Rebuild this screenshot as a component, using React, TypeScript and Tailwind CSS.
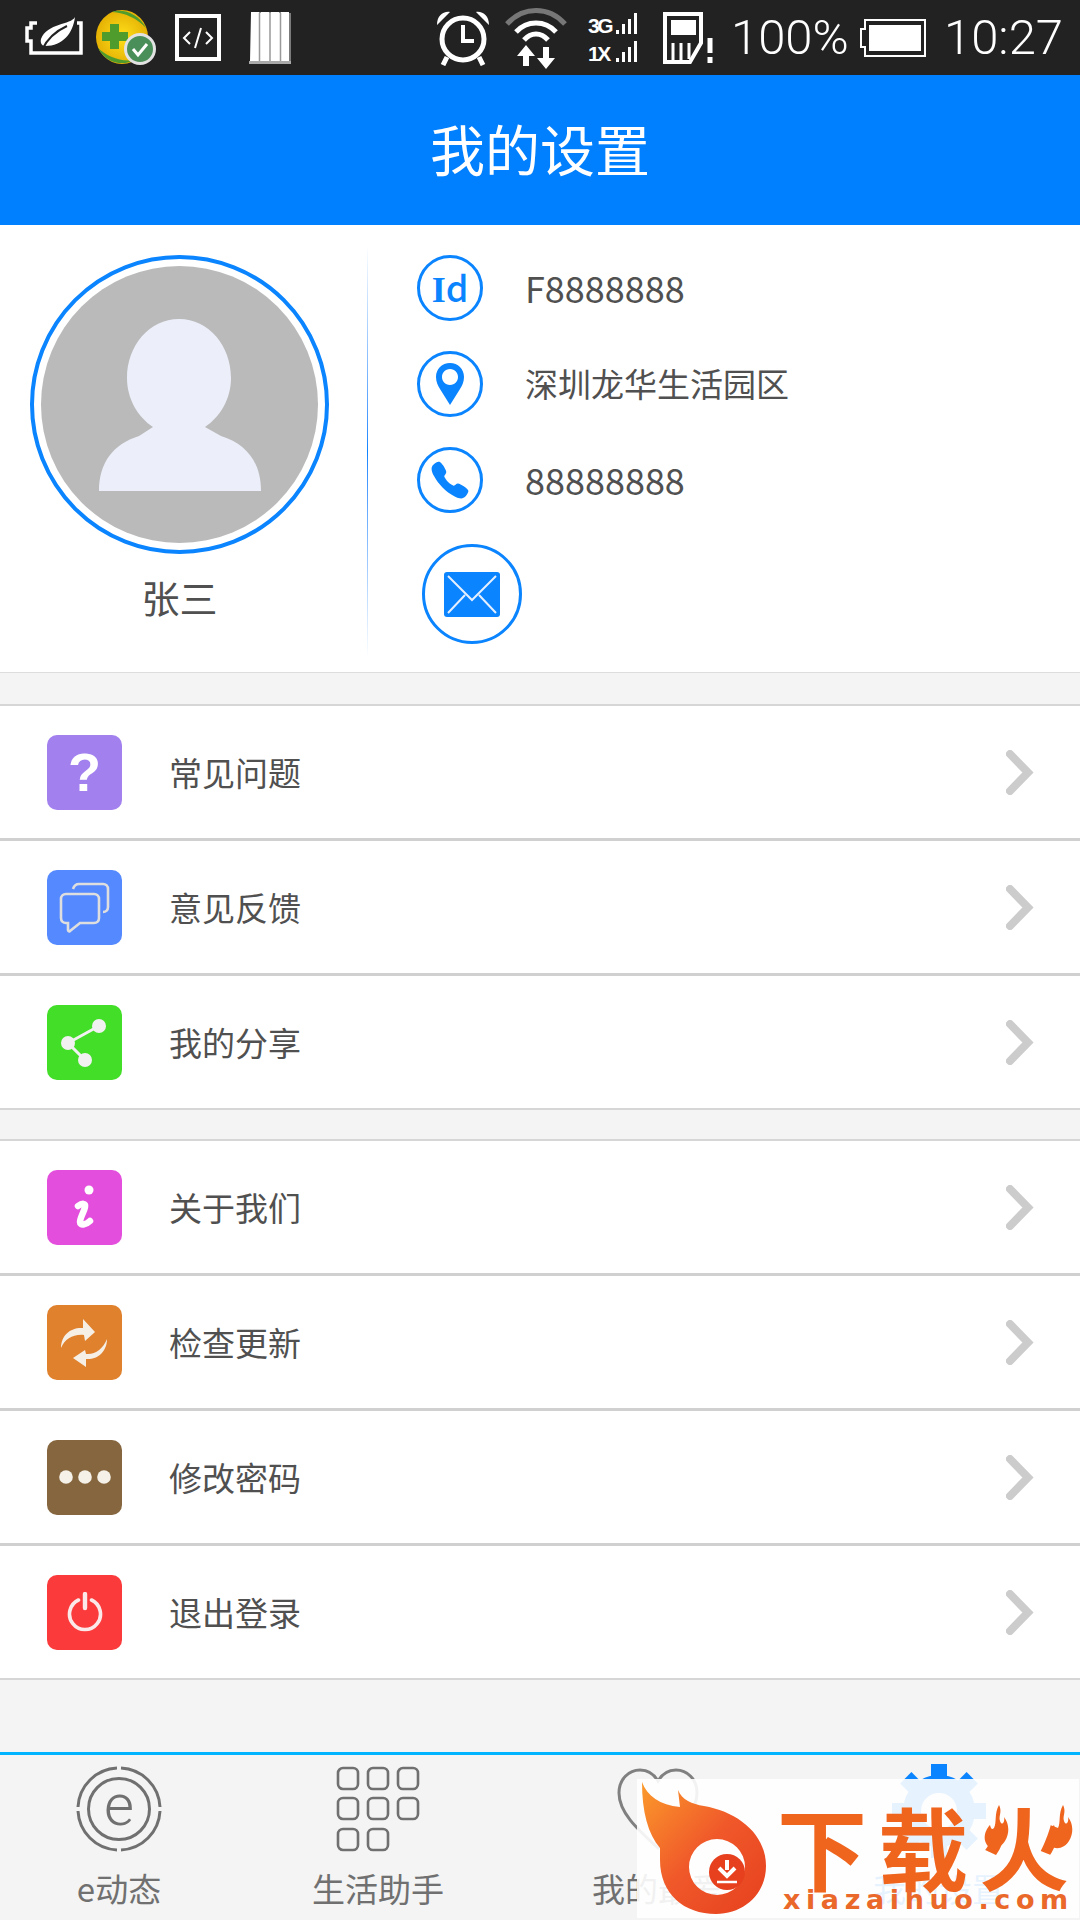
import { IoCall } from 'react-icons/io5';
import type { ReactNode } from 'react';

function LeafBattery() {
  return (
    <svg width="58" height="41" viewBox="0 0 58 41" className="-mt-[4px] ml-[25px]">
      <path d="M12 8H6v5H2v13h4v12h50V8h-4" fill="none" stroke="#fff" strokeWidth="3.500" />
      <path d="M50 2C46 10 22 8 16 24c-1 4 1 7 4 7C38 31 48 18 50 2z" fill="#fff" />
      <path d="M17 35C22 24 31 16 42 11" fill="none" stroke="#222" strokeWidth="2" />
    </svg>
  );
}

function Guard() {
  return (
    <svg width="62" height="56" viewBox="0 0 62 56" className="ml-[12px]">
      <defs>
        <radialGradient id="guard" cx="0.5" cy="0.5" r="0.6">
          <stop offset="0" stopColor="#ffe01a" />
          <stop offset="1" stopColor="#e0a800" />
        </radialGradient>
      </defs>
      <ellipse cx="27" cy="27" rx="26" ry="27" fill="url(#guard)" />
      <path d="M17 2C28-2 44 4 51 18 42 8 30 3 17 2zM3 38c8 8 22 14 36 12-10 6-28 4-36-12z" fill="#4f9c2d" />
      <path d="M15 14h9v8h9v9h-9v8h-9v-8H7v-9h8z" fill="#4f9c2d" />
      <circle cx="45" cy="39" r="14.500" fill="#4a8f5a" stroke="#e2e2e2" strokeWidth="3" />
      <path d="M38 39l5 6 9-11" fill="none" stroke="#fff" strokeWidth="3" />
    </svg>
  );
}

function CodeBox() {
  return (
    <svg width="46" height="47" viewBox="0 0 46 47" className="ml-[18px]">
      <rect x="2" y="2" width="42" height="43" fill="none" stroke="#fff" strokeWidth="4" />
      <path d="M15 18l-6 6 6 6M31 18l6 6-6 6M26 14l-6 20" fill="none" stroke="#fff" strokeWidth="2" />
    </svg>
  );
}

function Barcode() {
  return (
    <svg width="42" height="52" viewBox="0 0 42 52" className="ml-[28px]">
      <path d="M2 0h8l1 1 1-1h8l1 1 1-1h8l1 1 1-1h8v49l1 3H0l1-3z" fill="#fff" />
      <path d="M0 49h42v3H0z" fill="#aaa" />
      <path d="M10.500 1v48M21 1v48M31.500 1v48M41 1v48" stroke="#999" strokeWidth="1.500" />
    </svg>
  );
}

function Alarm() {
  return (
    <svg width="56" height="56" viewBox="0 0 56 56">
      <circle cx="28" cy="29" r="21" fill="none" stroke="#fff" strokeWidth="5" />
      <path d="M2 15C2 6 8 1 15 2zM54 15c0-9-6-14-13-13z" fill="#fff" />
      <path d="M28 15v16h11" fill="none" stroke="#fff" strokeWidth="4" />
      <path d="M12 47l-4 8M44 47l4 8" stroke="#fff" strokeWidth="5" />
    </svg>
  );
}

function Wifi() {
  return (
    <svg width="62" height="62" viewBox="0 0 62 62" className="ml-[14px]">
      <path d="M2 17C18 -1 44 -1 60 17" fill="none" stroke="#777" strokeWidth="5" />
      <path d="M11 25C22 13 40 13 51 25" fill="none" stroke="#fff" strokeWidth="5" />
      <path d="M19 33C26 25 36 25 43 33" fill="none" stroke="#fff" strokeWidth="5" />
      <path d="M21 38l9 11h-6v10h-6V49h-6zM41 62l9-11h-6V40h-6v11h-6z" fill="#fff" />
    </svg>
  );
}

function Bars() {
  return (
    <svg width="21" height="21" viewBox="0 0 21 21">
      <path d="M0 21v-4h3v4zM6 21V11h3v10zM12 21V6h3v15zM18 21V0h3v21z" fill="#fff" />
    </svg>
  );
}

function Signal() {
  return (
    <div className="ml-[21px] flex w-[49px] flex-col gap-[7px] text-[21px] leading-[16px] font-bold text-white font-['Liberation_Sans',sans-serif]">
      <div className="flex h-[21px] items-end justify-between">
        <span className="tracking-[-2.500px]">3G</span>
        <Bars />
      </div>
      <div className="flex h-[21px] items-end justify-between">
        <span className="tracking-[-2.500px]">1X</span>
        <Bars />
      </div>
    </div>
  );
}

function Sim() {
  return (
    <svg width="52" height="52" viewBox="0 0 52 52" className="ml-[26px]">
      <path d="M2 2h36v29L27 50H2z" fill="none" stroke="#fff" strokeWidth="4" />
      <rect x="8" y="8" width="25" height="15" fill="#fff" />
      <path d="M10 31v18M18 31v18M26 31v16" stroke="#fff" strokeWidth="3" />
      <path d="M47 26v15M47 45v6" stroke="#fff" strokeWidth="5" />
    </svg>
  );
}

function BatteryFull() {
  return (
    <svg width="66" height="38" viewBox="0 0 66 38" className="ml-[15px]">
      <path d="M5 10V1h60v36H5v-9H1V10z" fill="none" stroke="#fff" strokeWidth="2" />
      <rect x="9" y="6" width="52" height="26" fill="#fff" />
    </svg>
  );
}

function StatusBar() {
  return (
    <div className="flex h-[75px] items-center bg-[#222222] text-[49px] leading-none font-light text-white font-['Roboto',sans-serif]">
      <LeafBattery />
      <Guard />
      <CodeBox />
      <Barcode />
      <div className="ml-[144px]">
        <Alarm />
      </div>
      <Wifi />
      <Signal />
      <Sim />
      <span className="ml-[16px] w-[114px] whitespace-nowrap">100%</span>
      <BatteryFull />
      <span className="ml-[18px] whitespace-nowrap">10:27</span>
    </div>
  );
}

function IconCircle({ children }: { children: ReactNode }) {
  return (
    <div className="flex h-[66px] w-[66px] shrink-0 items-center justify-center rounded-full border-[3px] border-[#0a84ff] text-[#0a84ff]">
      {children}
    </div>
  );
}

function InfoRow({ icon, text }: { icon: ReactNode; text: ReactNode }) {
  return (
    <div className="flex h-[66px] items-center">
      <IconCircle>{icon}</IconCircle>
      <div className="ml-[42px]">{text}</div>
    </div>
  );
}

function Profile() {
  return (
    <section className="flex h-[448px] border-b border-[#dddddd] bg-white">
      <div className="flex w-[367px] flex-col items-center pt-[30px] pr-[8px]">
        <div className="h-[299px] w-[299px] rounded-full border-[4px] border-[#0a84ff] bg-white p-[7px]">
          <div className="h-full w-full rounded-full bg-[#bababa]">
            <svg viewBox="0 0 277 277" className="h-full w-full">
              <path
                d="M138 53C108 53 86 80 86 112C86 133 97 151 112 161L98 170C72 178 58 197 58 225L220 225C220 197 206 178 180 170L164 161C179 151 190 133 190 112C190 80 168 53 138 53Z"
                fill="#ecefFA"
              />
            </svg>
          </div>
        </div>
        <div className="mt-[18px] text-[38px] leading-[50px] text-[#505050]">张三</div>
      </div>
      <div className="mt-[20px] h-[413px] w-px bg-gradient-to-b from-white via-[#0a84ff] to-white" />
      <div className="flex flex-col pt-[30px] pl-[49px]">
        <div className="flex flex-col gap-[30px] text-[#505050]">
          <InfoRow
            icon={
              <span className="flex items-baseline text-[36px] leading-none font-medium">
                <span className="font-['Liberation_Serif',serif] font-bold">I</span>
                <span>d</span>
              </span>
            }
            text={<span className="text-[36px] leading-none">F8888888</span>}
          />
          <InfoRow
            icon={
              <svg width="28" height="42" viewBox="0 0 28 42">
                <path
                  fillRule="evenodd"
                  d="M14 0C6 0 0 6 0 14c0 5 2 9 4 12l10 16 10-16c2-3 4-7 4-12C28 6 22 0 14 0zm0 6c5 0 8 4 8 8s-3 8-8 8-8-4-8-8 3-8 8-8z"
                  fill="currentColor"
                />
              </svg>
            }
            text={<span className="text-[33px] leading-none">深圳龙华生活园区</span>}
          />
          <InfoRow
            icon={<IoCall size={42} />}
            text={<span className="text-[36px] leading-none">88888888</span>}
          />
        </div>
        <div className="mt-[31px] ml-[5px] flex h-[100px] w-[100px] items-center justify-center rounded-full border-[3px] border-[#0a84ff]">
          <svg width="56" height="45" viewBox="0 0 56 45">
            <rect width="56" height="45" rx="3" fill="#0a84ff" />
            <path d="M4 4l24 24L52 4M4 41l17-18M52 41L35 23" fill="none" stroke="#e4efff" strokeWidth="2" />
          </svg>
        </div>
      </div>
    </section>
  );
}

const qIcon = <span className="text-[54px] leading-none font-bold text-white font-['Liberation_Sans',sans-serif]">?</span>;

const chatIcon = (
  <svg width="75" height="75" viewBox="0 0 75 75" fill="none" stroke="#dedede" strokeWidth="2.600">
    <path d="M26 19c1-3 3-5 6-5h24c3 0 5 2 5 5v18c0 3-2 5-5 5" />
    <path d="M19 24h28c3 0 5 2 5 5v19c0 3-2 5-5 5H33l-10 8c-1 1-2 0-2-1v-7h-2c-3 0-5-2-5-5V29c0-3 2-5 5-5z" />
  </svg>
);

const shareIcon = (
  <svg width="75" height="75" viewBox="0 0 75 75">
    <path d="M52 21L21 38l17 17" fill="none" stroke="#f1f1f1" strokeWidth="3" />
    <circle cx="52" cy="21" r="7" fill="#f1f1f1" />
    <circle cx="21" cy="38" r="7" fill="#f1f1f1" />
    <circle cx="38" cy="55" r="7" fill="#f1f1f1" />
  </svg>
);

const infoIcon = (
  <svg width="75" height="75" viewBox="0 0 75 75" fill="none" stroke="#fff" strokeLinecap="round">
    <circle cx="42" cy="20" r="4.500" fill="#fff" stroke="none" />
    <path d="M31 36c4-3 8-3 7 1-1 5-5 11-5 15 0 4 6 3 10-1" strokeWidth="6.500" />
  </svg>
);

const refreshIcon = (
  <svg width="75" height="75" viewBox="0 0 75 75">
    <path d="M14 43C14 30 24 22 36 23L36 14 48 27 38 36 37 30C26 29 18 34 14 43Z" fill="#f6efe6" />
    <path d="M60 34C60 47 50 55 39 54L39 62 26 53 38 45 39 49C48 50 56 44 60 34Z" fill="#f6efe6" />
  </svg>
);

const dotsIcon = (
  <svg width="52" height="14" viewBox="0 0 52 14">
    <circle cx="7" cy="7" r="6.800" fill="#f5f0e8" />
    <circle cx="26" cy="7" r="6.800" fill="#f5f0e8" />
    <circle cx="45" cy="7" r="6.800" fill="#f5f0e8" />
  </svg>
);

const powerIcon = (
  <svg width="36" height="40" viewBox="0 0 36 40" fill="none" stroke="#fbe9e9" strokeWidth="3.600" strokeLinecap="round">
    <path d="M11.500 8A15.500 15.500 0 1 0 24.500 8" />
    <path d="M18 2v14" strokeWidth="4.400" />
  </svg>
);

function MenuRow({ label, bg, icon, last }: { label: string; bg: string; icon: ReactNode; last?: boolean }) {
  return (
    <div className={`flex items-center pr-[46px] pl-[47px] ${last ? 'h-[134px] border-b-2 border-[#d6d6d6]' : 'h-[135px] border-b-[3px] border-[#d0d0d0]'}`}>
      <div className={`flex h-[75px] w-[75px] items-center justify-center rounded-[10px] ${bg}`}>{icon}</div>
      <span className="ml-[47px] flex-1 text-[33px] leading-none text-[#505050]">{label}</span>
      <svg width="28" height="45" viewBox="0 0 28 45" fill="none" stroke="#cccccc" strokeWidth="8" strokeLinecap="round">
        <path d="M4 4l18 18.500L4 41" />
      </svg>
    </div>
  );
}

function Menus() {
  return (
    <>
      <section className="mt-[31px] border-t-2 border-[#d6d6d6] bg-white">
        <MenuRow label="常见问题" bg="bg-[#a281ee]" icon={qIcon} />
        <MenuRow label="意见反馈" bg="bg-[#5589ff]" icon={chatIcon} />
        <MenuRow label="我的分享" bg="bg-[#42de28]" icon={shareIcon} last />
      </section>
      <section className="mt-[29px] border-t-2 border-[#d6d6d6] bg-white">
        <MenuRow label="关于我们" bg="bg-[#e34fdc]" icon={infoIcon} />
        <MenuRow label="检查更新" bg="bg-[#e0812d]" icon={refreshIcon} />
        <MenuRow label="修改密码" bg="bg-[#85663e]" icon={dotsIcon} />
        <MenuRow label="退出登录" bg="bg-[#fb3b3b]" icon={powerIcon} last />
      </section>
    </>
  );
}

const eIcon = (
  <svg width="86" height="86" viewBox="0 0 86 86" fill="none" stroke="#707070">
    <path d="M41 2A41 41 0 0 0 2 41M45 2A41 41 0 0 1 84 41M84 45A41 41 0 0 1 45 84M41 84A41 41 0 0 1 2 45" strokeWidth="3" />
    <circle cx="43" cy="43" r="30.500" strokeWidth="3" />
    <text x="43" y="59" textAnchor="middle" fontSize="58" fontWeight="300" fill="#707070" stroke="none" fontFamily="Roboto">
      e
    </text>
  </svg>
);

const gridIcon = (
  <svg width="84" height="86" viewBox="0 0 84 86" fill="none" stroke="#707070" strokeWidth="2.600">
    {[
      [2, 2],
      [32, 2],
      [62, 2],
      [2, 32],
      [32, 32],
      [62, 32],
      [2, 63],
      [32, 63],
    ].map(([x, y]) => (
      <rect key={`${x}-${y}`} x={x} y={y} width="20" height="21" rx="5" />
    ))}
  </svg>
);

const heartIcon = (
  <svg width="84" height="86" viewBox="0 0 84 86" fill="none" stroke="#808080" strokeWidth="3">
    <path d="M42 82C20 62 3 46 3 27 3 13 13 4 24 4c8 0 14 4 18 11C46 8 52 4 60 4c11 0 21 9 21 23 0 19-17 35-39 55z" />
  </svg>
);

const gearIcon = (
  <svg width="94" height="94" viewBox="0 0 94 94" className="-mt-[2px]">
    <circle cx="47" cy="47" r="27" fill="none" stroke="#0a84ff" strokeWidth="18" />
    {[0, 45, 90, 135, 180, 225, 270, 315].map((a) => (
      <rect key={a} x="39" y="0" width="16" height="18" fill="#0a84ff" transform={`rotate(${a} 47 47)`} />
    ))}
  </svg>
);

function Tab({ icon, label, active }: { icon: ReactNode; label: string; active?: boolean }) {
  return (
    <div className="flex flex-col items-center pt-[11px]">
      <div className="flex h-[86px] items-start">{icon}</div>
      <span className={`mt-[18px] text-[33px] leading-[36px] ${active ? 'text-[#0a84ff]' : 'text-[#707070]'}`}>{label}</span>
    </div>
  );
}

function BottomNav() {
  return (
    <nav className="mt-auto grid h-[168px] grid-cols-[238px_280px_280px_282px] border-t-[3px] border-[#00b4ff] bg-[#f4f4f4]">
      <Tab icon={eIcon} label="e动态" />
      <Tab icon={gridIcon} label="生活助手" />
      <Tab icon={heartIcon} label="我的最爱" />
      <Tab icon={gearIcon} label="我的设置" active />
    </nav>
  );
}

function Flame({ className }: { className: string }) {
  return (
    <svg width="26" height="46" viewBox="0 0 26 46" className={className}>
      <path d="M16 0c4 8-2 12 2 18 2 2 4-2 3-6 5 6 6 16 1 24-4 7-14 10-18 4-5-7-1-16 3-20 1 4 2 5 4 3 3-6 0-14 5-23z" fill="#f0651e" />
    </svg>
  );
}

function Watermark() {
  return (
    <div className="absolute right-[1px] bottom-[2px] flex h-[139px] w-[442px] bg-white/90 pt-[3px] pl-[5px]">
      <svg width="126" height="134" viewBox="0 0 126 134" className="shrink-0">
        <defs>
          <linearGradient id="fire" x1="0" y1="0" x2="1" y2="1">
            <stop offset="0" stopColor="#fb9a2b" />
            <stop offset="0.5" stopColor="#f0582a" />
            <stop offset="1" stopColor="#e6401e" />
          </linearGradient>
        </defs>
        <path
          fill="url(#fire)"
          fillRule="evenodd"
          d="M0 0C5 14 18 23 38 25L36 8C40 18 50 22 62 24C96 30 124 52 124 84C124 112 102 132 74 132C42 132 18 112 18 78L18 66C6 52 0 30 0 0ZM75 57a28 28 0 1 0 0 56 28 28 0 0 0 0-56Z"
        />
        <circle cx="85" cy="90" r="18" fill="#e6401e" />
        <path d="M85 78v10M77 86l8 8 8-8" fill="none" stroke="#fff" strokeWidth="4" />
        <path d="M75 100h20" stroke="#fff" strokeWidth="2.500" />
      </svg>
      <div className="ml-[1px] flex flex-col items-start">
        <span className="mt-[18px] ml-[8px] text-[90px] leading-[90px] font-bold tracking-[11px] whitespace-nowrap text-[#f0651e]">下载火</span>
        <span className="mt-[-4px] ml-[14px] text-[27px] leading-[28px] font-bold tracking-[5.600px] whitespace-nowrap text-[#e9682a] font-['DejaVu_Sans',sans-serif]">xiazaihuo.com</span>
      </div>
      <Flame className="absolute top-[26px] left-[346px]" />
      <Flame className="absolute top-[26px] left-[410px]" />
    </div>
  );
}

export default function App() {
  return (
    <div className="relative flex h-[1920px] w-[1080px] flex-col overflow-hidden bg-[#f4f4f4] font-['Noto_Sans_CJK_SC',sans-serif]">
      <StatusBar />
      <header className="flex h-[150px] items-center justify-center bg-[#0080ff] pb-[6px] text-[55px] leading-none text-white">我的设置</header>
      <Profile />
      <Menus />
      <BottomNav />
      <Watermark />
    </div>
  );
}
